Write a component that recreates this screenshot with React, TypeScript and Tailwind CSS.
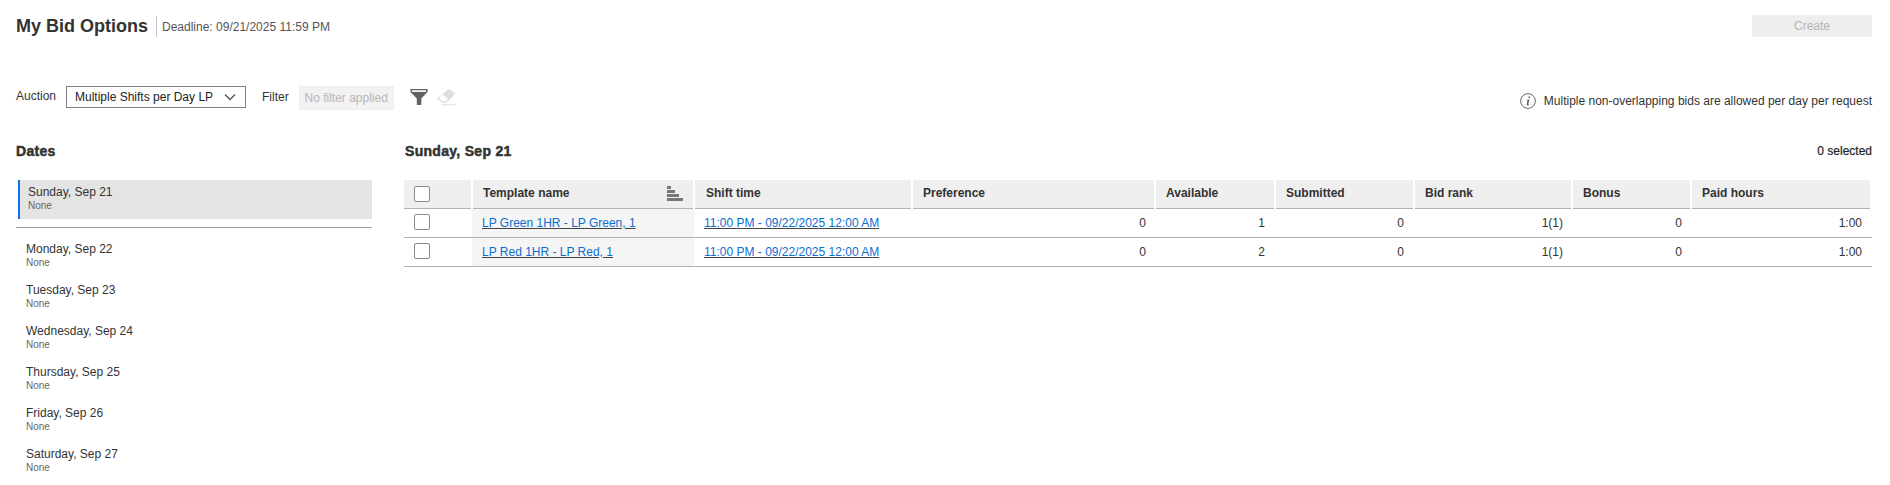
const days = ["Monday, Sep 22", "Tuesday, Sep 23", "Wednesday, Sep 24", "Thursday, Sep 25", "Friday, Sep 26", "Saturday, Sep 27"];
const rows = [
  { name: "LP Green 1HR - LP Green, 1", avail: "1" },
  { name: "LP Red 1HR - LP Red, 1", avail: "2" },
];
const heads = ["Preference", "Available", "Submitted", "Bid rank", "Bonus", "Paid hours"];

function Box() {
  return <div className="w-4 h-4 border border-[#8a8a8a] rounded-[2px] bg-white" />;
}

export default function App() {
  return (
    <div className="w-[1890px] h-[485px] overflow-hidden bg-white text-[#333] text-xs font-['Liberation_Sans',Arial,sans-serif]">
      <div className="flex items-start justify-between pl-4 pr-[18px] pt-[15px] h-[84px]">
        <div className="flex items-center h-[23px]">
          <h1 className="text-lg font-bold leading-[23px] text-[#333]">My Bid Options</h1>
          <div className="ml-2 w-px h-[21px] bg-[#c4c4c4]" />
          <span className="ml-[5px] text-xs text-[#555] mt-[1px]">Deadline: 09/21/2025 11:59 PM</span>
        </div>
        <button className="w-[120px] h-[22px] bg-[#eeeeee] text-[#b5b5b5] text-xs">Create</button>
      </div>

      <div className="flex items-center justify-between pl-4 pr-[18px] h-[26px]">
        <div className="flex items-center">
          <span className="w-[50px] -mt-[2px]">Auction</span>
          <div className="flex items-center justify-between w-[180px] h-[22px] border border-[#808080] pl-[8px] pr-[9px] text-[#222]">
            <span>Multiple Shifts per Day LP</span>
            <svg width="12" height="8" viewBox="0 0 12 8" fill="none" stroke="#555" strokeWidth="1.4"><path d="M1 1.5 6 6.5 11 1.5" /></svg>
          </div>
          <span className="ml-4">Filter</span>
          <div className="ml-[10px] w-[95px] h-6 mt-[1px] bg-[#f2f2f2] border border-[#eeeeee] text-[#b8b8b8] flex items-center justify-center">No filter applied</div>
          <svg className="ml-4" width="18" height="18" viewBox="0 0 18 18"><path d="M0.5 1h17v3L11.3 10.5V17H6.8v-6.5L0.5 4z" fill="#626262" /><rect x="2" y="2.2" width="14" height="1.7" fill="#fff" /></svg>
          <svg className="ml-[8px]" width="20" height="18" viewBox="0 0 20 18"><path d="M13 0.8 19.3 5.6 10.8 14.6H5.8L0.8 10.6z" fill="#dedede" /><path d="M6.2 6.3 12 10.8 9.9 13.2H6.4L2.8 10.4z" fill="#fff" /><rect x="5.5" y="15.8" width="14" height="1.4" fill="#e6e6e6" /></svg>
        </div>
        <div className="flex items-center gap-2 mt-[7px] text-[#333]">
          <svg width="16" height="16" viewBox="0 0 16 16" fill="none"><circle cx="8" cy="8" r="7.4" stroke="#666" strokeWidth="1" /><path d="M8.7 3.4h1.4l-.3 1.5H8.4zM7.7 6.5h1.6l-1 4.6c-.1.4.2.5.9.2l-.1.6c-1 .6-2.6.7-2.3-.7l.7-3.6-.8.1z" fill="#555" /></svg>
          <span>Multiple non-overlapping bids are allowed per day per request</span>
        </div>
      </div>

      <div className="flex mt-[32px]">
        <aside className="w-[356px] ml-4 shrink-0">
          <h2 className="text-sm font-black leading-[18px] [-webkit-text-stroke:0.5px_#333] tracking-[0.3px]">Dates</h2>
          <div className="mt-[20px] ml-[2px] h-[39px] bg-[#e4e4e4] border-l-2 border-[#0a74f0] pl-[8px] pt-[4px]">
            <div className="leading-[16px] text-[#333]">Sunday, Sep 21</div>
            <div className="text-[10px] leading-[12px] text-[#666]">None</div>
          </div>
          <div className="mt-2 border-t border-[#a3a3a3]" />
          <div className="pt-[13px]">
            {days.map((d) => (
              <div key={d} className="h-[41px] pl-[10px]">
                <div className="leading-[16px] text-[#333]">{d}</div>
                <div className="text-[10px] leading-[12px] text-[#666]">None</div>
              </div>
            ))}
          </div>
        </aside>

        <main className="ml-[32px] w-[1468px]">
          <div className="flex justify-between h-[18px] items-center">
            <h2 className="ml-[1px] text-sm font-black leading-[18px] [-webkit-text-stroke:0.5px_#333] tracking-[0.3px]">Sunday, Sep 21</h2>
            <span className="text-[#222] [-webkit-text-stroke:0.2px_#222]">0 selected</span>
          </div>
          <div className="mt-[20px] w-[1467px]">
            <div className="flex gap-[2px] h-[29px]">
              <div className="w-[67px] bg-[#efefef] border-b border-[#b0b3b8] pl-[10px] pt-[6px]"><Box /></div>
              <div className="w-[220px] bg-[#efefef] border-b border-[#b0b3b8] pl-[10px] pb-[2px] font-bold flex items-center justify-between pr-[10px]">
                <span>Template name</span>
                <svg width="16" height="15" viewBox="0 0 16 15" fill="#777"><rect x="0" y="0" width="4" height="3" /><rect x="0" y="4" width="8" height="3" /><rect x="0" y="8" width="12" height="3" /><rect x="0" y="12" width="16" height="3" /></svg>
              </div>
              <div className="w-[216px] bg-[#efefef] border-b border-[#b0b3b8] pl-[11px] pb-[2px] font-bold flex items-center">Shift time</div>
              {heads.map((h, i) => (
                <div key={h} className={`${["w-[241px]", "w-[118px]", "w-[137px]", "w-[156px]", "w-[117px]", "w-[178px]"][i]} bg-[#efefef] border-b border-[#b0b3b8] pl-[10px] pb-[2px] font-bold flex items-center`}>{h}</div>
              ))}
            </div>
            {rows.map((r) => (
              <div key={r.name} className="flex h-[29px] border-b border-[#b0b3b8] w-[1468px] items-stretch">
                <div className="w-[68px] pl-[10px] pt-[5px]"><Box /></div>
                <div className="w-[222px] bg-[#f5f5f5] pl-[10px] flex items-center"><a className="underline text-[#0a6ed1] decoration-[#444]">{r.name}</a></div>
                <div className="w-[218px] pl-[10px] flex items-center"><a className="underline text-[#0a6ed1] decoration-[#444]">11:00 PM - 09/22/2025 12:00 AM</a></div>
                <div className="w-[243px] text-right pr-[9px] leading-[28px]">0</div>
                <div className="w-[120px] text-right pr-[10px] leading-[28px]">{r.avail}</div>
                <div className="w-[139px] text-right pr-[10px] leading-[28px]">0</div>
                <div className="w-[158px] text-right pr-[9px] leading-[28px]">1(1)</div>
                <div className="w-[119px] text-right pr-[9px] leading-[28px]">0</div>
                <div className="w-[181px] text-right pr-[10px] leading-[28px]">1:00</div>
              </div>
            ))}
          </div>
        </main>
      </div>
    </div>
  );
}
